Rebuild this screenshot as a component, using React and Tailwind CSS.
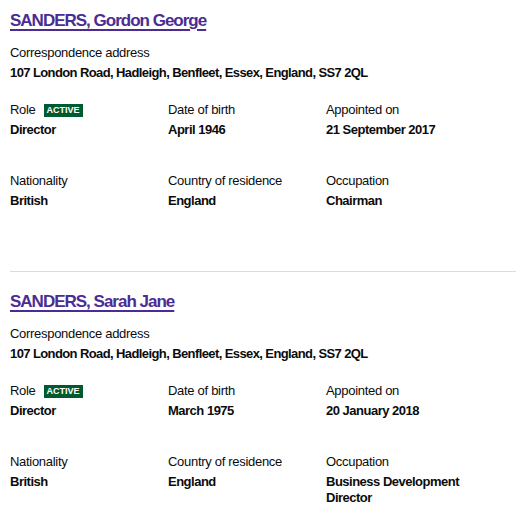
import React from 'react';

const officers = [
  {
    name: 'SANDERS, Gordon George',
    address: '107 London Road, Hadleigh, Benfleet, Essex, England, SS7 2QL',
    role: 'Director',
    dob: 'April 1946',
    appointed: '21 September 2017',
    nationality: 'British',
    residence: 'England',
    occupation: 'Chairman',
  },
  {
    name: 'SANDERS, Sarah Jane',
    address: '107 London Road, Hadleigh, Benfleet, Essex, England, SS7 2QL',
    role: 'Director',
    dob: 'March 1975',
    appointed: '20 January 2018',
    nationality: 'British',
    residence: 'England',
    occupation: 'Business Development Director',
  },
];

const Field = ({ label, value, badge }) => (
  <div className="w-[158px] pr-3">
    <div className="flex items-center text-[13px] leading-[20px] tracking-[-0.3px]">
      {label}
      {badge && (
        <span className="ml-[8px] bg-[#005a30] px-[3px] text-[9px] font-bold leading-[13px] tracking-normal text-white">
          ACTIVE
        </span>
      )}
    </div>
    <div className="text-[13px] font-bold leading-[16px] mt-[2px] tracking-[-0.5px]">{value}</div>
  </div>
);

const Officer = ({ o, first }) => (
  <div className={first ? 'pt-[9px]' : 'pt-[18px]'}>
    <a href="#" className="text-[17px] font-bold leading-[24px] tracking-[-1px] text-[#4c2c92] underline underline-offset-[3px] decoration-[2px]">
      {o.name}
    </a>
    <div className="mt-[10px] text-[13px] leading-[20px] tracking-[-0.3px]">Correspondence address</div>
    <div className="text-[13px] font-bold leading-[20px] tracking-[-0.6px]">{o.address}</div>
    <div className="mt-[17px] flex">
      <Field label="Role" value={o.role} badge />
      <Field label="Date of birth" value={o.dob} />
      <Field label="Appointed on" value={o.appointed} />
    </div>
    <div className="mt-[33px] flex">
      <Field label="Nationality" value={o.nationality} />
      <Field label="Country of residence" value={o.residence} />
      <Field label="Occupation" value={o.occupation} />
    </div>
  </div>
);

export default function App() {
  return (
    <div className="min-h-[527px] bg-white pl-[10px] text-[#0b0c0c]" style={{ fontFamily: '"Liberation Sans", Arial, sans-serif' }}>
      <Officer o={officers[0]} first />
      <div className="mt-[62px] h-px bg-[#dcdcdc]" />
      <Officer o={officers[1]} />
    </div>
  );
}
